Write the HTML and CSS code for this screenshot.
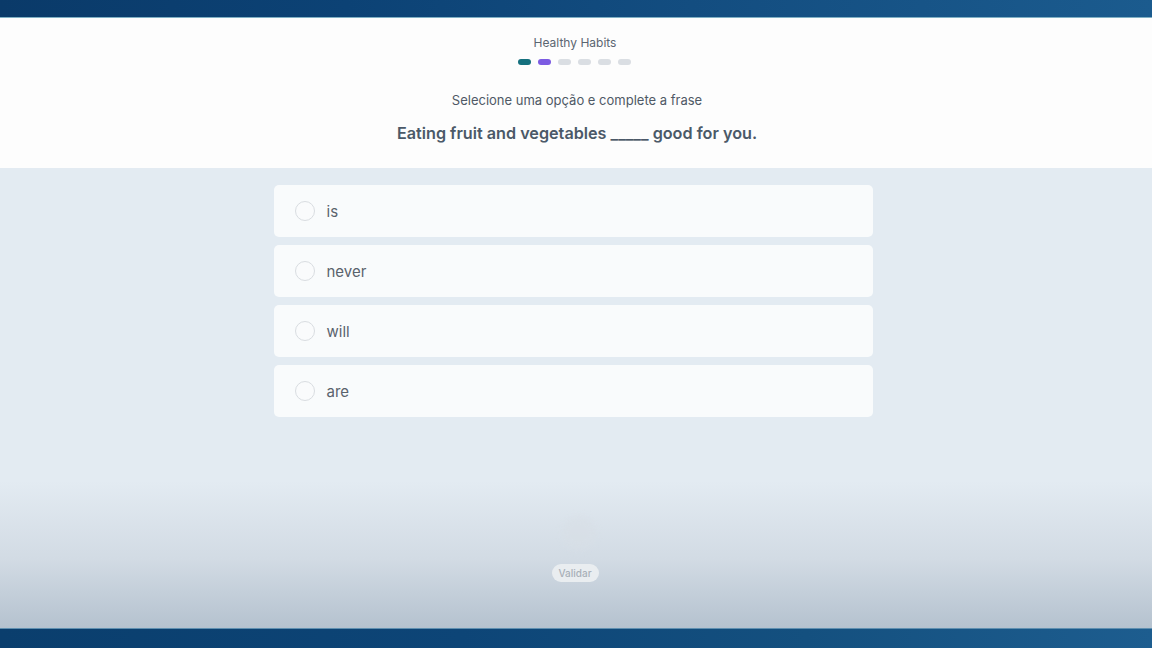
FILE: index.html
```html
<!DOCTYPE html>
<html>
<head>
<meta charset="utf-8">
<link rel="stylesheet" href="styles.css">
</head>
<body>
<div class="app">
  <div class="topbar"></div>
  <header class="header">
    <div class="lesson">Healthy Habits</div>
    <div class="dots">
      <span class="dot done"></span>
      <span class="dot current"></span>
      <span class="dot"></span>
      <span class="dot"></span>
      <span class="dot"></span>
      <span class="dot"></span>
    </div>
    <div class="instruction">Selecione uma opção e complete a frase</div>
    <div class="sentence">Eating fruit and vegetables _____ good for you.</div>
  </header>
  <main class="content">
    <div class="options">
      <div class="option"><span class="radio"></span><span class="label">is</span></div>
      <div class="option"><span class="radio"></span><span class="label">never</span></div>
      <div class="option"><span class="radio"></span><span class="label">will</span></div>
      <div class="option"><span class="radio"></span><span class="label">are</span></div>
    </div>
    <div class="footer">
      <span class="ghost"></span>
      <button class="validate">Validar</button>
    </div>
  </main>
  <div class="bottombar"></div>
</div>
</body>
</html>
```

FILE: styles.css
```css
* { box-sizing: border-box; }
html, body { margin: 0; padding: 0; }
body {
  width: 1152px;
  height: 648px;
  overflow: hidden;
  font-family: Inter, "Noto Sans", sans-serif;
}
.app {
  display: flex;
  flex-direction: column;
  height: 648px;
}
.topbar {
  height: 18px;
  flex: none;
  background: linear-gradient(90deg, #0a3a69 0%, #0c4275 30%, #134d80 60%, #1b5b8e 100%);
  border-bottom: 1px solid #7fb0c4;
}
.header {
  height: 150px;
  flex: none;
  background: #fdfdfd;
  display: flex;
  flex-direction: column;
  align-items: center;
  padding-top: 17px;
}
.lesson {
  font-size: 12px;
  color: #5b6571;
  line-height: 16px;
  margin-left: -2px;
}
.dots {
  display: flex;
  gap: 7px;
  margin-top: 8px;
  margin-left: -3px;
}
.dot {
  width: 13px;
  height: 6px;
  border-radius: 3px;
  background: #dadee3;
}
.dot.done { background: #15707e; }
.dot.current { background: #7c5be2; }
.instruction {
  margin-top: 26px;
  font-size: 13px;
  color: #4f5966;
  line-height: 18px;
  margin-left: 2px;
}
.sentence {
  margin-top: 13px;
  font-size: 16.2px;
  font-weight: 600;
  color: #4b5968;
  line-height: 22px;
  margin-left: 2px;
}
.content {
  flex: 1;
  background: linear-gradient(180deg, #e3ebf2 0%, #e3ebf2 68%, #d2dbe4 85%, #b5c2cf 100%);
  display: flex;
  flex-direction: column;
  align-items: center;
  padding-top: 17px;
}
.options {
  width: 599px;
  margin-left: -6px;
  display: flex;
  flex-direction: column;
  gap: 8px;
}
.option {
  height: 52px;
  background: #f9fbfc;
  border-radius: 5px;
  display: flex;
  align-items: center;
  padding-left: 21px;
}
.radio {
  width: 20px;
  height: 20px;
  border-radius: 50%;
  border: 1.5px solid #d9dde1;
  background: #fafbfc;
}
.label {
  margin-left: 12px;
  font-size: 15px;
  color: #5a626c;
}
.footer {
  margin-top: 99px;
  display: flex;
  flex-direction: column;
  align-items: center;
}
.ghost {
  width: 34px;
  height: 34px;
  border-radius: 50%;
  background: #d8dfe6;
  opacity: 0.6;
  filter: blur(3px);
  margin-left: 6px;
}
.validate {
  margin-top: 14px;
  height: 18px;
  padding: 0 7px;
  border: none;
  border-radius: 9px;
  background: #e9edf0;
  color: #a8b0b8;
  font-family: Inter, "Noto Sans", sans-serif;
  font-size: 10px;
  font-weight: 500;
  margin-left: -2px;
}
.bottombar {
  height: 20px;
  flex: none;
  background: linear-gradient(90deg, #0a3e6d 0%, #0d4577 40%, #14507f 70%, #1d5d8f 100%);
  border-top: 1px solid #5f8fb0;
}
```
